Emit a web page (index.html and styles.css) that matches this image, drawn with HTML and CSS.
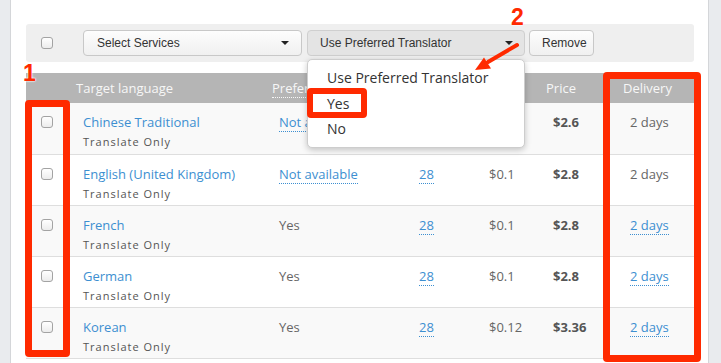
FILE: index.html
```html
<!DOCTYPE html>
<html lang="en">

<head>
    <meta charset="UTF-8">
    <meta name="viewport" content="width=device-width, initial-scale=1.0">
    <title>Target Languages</title>
    <link rel="stylesheet" href="styles.css">
</head>

<body>

    <div class="page">
        <div class="toolbar">
            <span class="check"></span>
            <button class="btn btn-services">Select Services <span class="caret"></span></button>
            <div class="menu-wrap">
                <button class="btn btn-pref">Use Preferred Translator <span class="caret"></span></button>
                <ul class="menu">
                    <li>Use Preferred Translator</li>
                    <li>Yes</li>
                    <li>No</li>
                </ul>
            </div>
            <button class="btn btn-remove">Remove</button>
        </div>

        <table class="langs">
            <colgroup>
                <col class="c-check">
                <col class="c-lang">
                <col class="c-pref">
                <col class="c-count">
                <col class="c-unit">
                <col class="c-price">
                <col class="c-delivery">
            </colgroup>
            <tr>
                <th></th>
                <th>Target language</th>
                <th><span class="dotted">Preferred</span></th>
                <th></th>
                <th></th>
                <th>Price</th>
                <th>Delivery</th>
            </tr>
            <tr>
                <td><span class="check"></span></td>
                <td><a class="lang">Chinese Traditional</a><div class="service">Translate Only</div></td>
                <td><a class="link">Not available</a></td>
                <td><a class="link">26</a></td>
                <td>$0.1</td>
                <td class="price">$2.6</td>
                <td>2 days</td>
            </tr>
            <tr>
                <td><span class="check"></span></td>
                <td><a class="lang">English (United Kingdom)</a><div class="service">Translate Only</div></td>
                <td><a class="link">Not available</a></td>
                <td><a class="link">28</a></td>
                <td>$0.1</td>
                <td class="price">$2.8</td>
                <td>2 days</td>
            </tr>
            <tr>
                <td><span class="check"></span></td>
                <td><a class="lang">French</a><div class="service">Translate Only</div></td>
                <td>Yes</td>
                <td><a class="link">28</a></td>
                <td>$0.1</td>
                <td class="price">$2.8</td>
                <td><a class="link">2 days</a></td>
            </tr>
            <tr>
                <td><span class="check"></span></td>
                <td><a class="lang">German</a><div class="service">Translate Only</div></td>
                <td>Yes</td>
                <td><a class="link">28</a></td>
                <td>$0.1</td>
                <td class="price">$2.8</td>
                <td><a class="link">2 days</a></td>
            </tr>
            <tr>
                <td><span class="check"></span></td>
                <td><a class="lang">Korean</a><div class="service">Translate Only</div></td>
                <td>Yes</td>
                <td><a class="link">28</a></td>
                <td>$0.12</td>
                <td class="price">$3.36</td>
                <td><a class="link">2 days</a></td>
            </tr>
        </table>
    </div>

    <!-- screenshot annotations -->
    <div class="mark box-check"></div>
    <div class="mark box-delivery"></div>
    <div class="mark box-yes"></div>
    <span class="num num-1">1</span>
    <span class="num num-2">2</span>
    <svg class="arrow" width="721" height="363" viewBox="0 0 721 363">
        <line x1="517" y1="45" x2="488" y2="62" stroke="#ff2a00" stroke-width="4" stroke-linecap="round" />
        <polygon points="475,70 484,57.5 491,68.5" fill="#ff2a00" />
    </svg>

</body>

</html>
```

FILE: styles.css
```css
body {
    margin: 0;
    background: #e9ebee;
    font-family: "Open Sans", sans-serif;
    position: relative;
    height: 363px;
    overflow: hidden;
}

.page {
    margin-left: 10px;
    width: 668px;
    height: 339px;
    padding: 24px 14px 0 15px;
    background: white;
    border-left: 1px solid #d4d6d9;
    border-right: 1px solid #d4d6d9;
    overflow: hidden;
}

.toolbar {
    display: flex;
    align-items: center;
    height: 38px;
    padding-left: 15px;
    background: #efefef;
    border-radius: 3px;
}

.check {
    display: block;
    width: 10px;
    height: 10px;
    border: 1px solid #a3a3a3;
    border-radius: 3px;
    background: linear-gradient(#ffffff, #ececec);
}

.toolbar .check {
    margin-right: 30px;
}

.btn {
    display: flex;
    align-items: center;
    justify-content: space-between;
    height: 26px;
    padding: 0 11px 0 12px;
    font-family: "Liberation Sans", Arial, sans-serif;
    font-size: 12px;
    color: #333;
    border: 1px solid #c8c8c8;
    border-radius: 4px;
    background: linear-gradient(#fdfdfd, #f0f0f0);
}

.btn-services {
    width: 219px;
    padding-left: 13px;
    padding-right: 12px;
}

.menu-wrap {
    position: relative;
    margin-left: 5px;
}

.btn-pref {
    width: 218px;
    background: #e4e4e4;
    border-color: #cfcfcf;
}

.btn-remove {
    width: 65px;
    margin-left: 4px;
}

.caret {
    width: 0;
    height: 0;
    border-left: 4px solid transparent;
    border-right: 4px solid transparent;
    border-top: 4px solid #222;
}

.menu {
    position: absolute;
    left: 0;
    top: 29px;
    width: 216px;
    margin: 0;
    padding: 5px 0;
    list-style: none;
    background: white;
    border: 1px solid #cdcdcd;
    border-radius: 5px;
    box-shadow: 0 2px 6px rgba(0, 0, 0, 0.22);
    z-index: 2;
}

.menu li {
    padding-left: 19px;
    line-height: 25.5px;
    font-size: 14px;
    color: #333;
}

.langs {
    width: 668px;
    margin-top: 11px;
    border-collapse: collapse;
    table-layout: fixed;
    font-size: 13px;
    color: #666;
}

.c-check { width: 44px; }
.c-lang { width: 196px; }
.c-pref { width: 140px; }
.c-count { width: 70px; }
.c-unit { width: 64px; }
.c-price { width: 77px; }
.c-delivery { width: 77px; }

th {
    height: 30px;
    padding: 0 0 0 6px;
    background: #b5b5b5;
    color: #f7f7f7;
    font-weight: normal;
    text-align: left;
    white-space: nowrap;
    overflow: hidden;
}

td {
    height: 51px;
    padding: 10px 0 0 13px;
    vertical-align: top;
    line-height: 19px;
    border-bottom: 1px solid #dedede;
    white-space: nowrap;
    box-sizing: border-box;
}

tr:nth-child(even) td {
    background: #f9f9f9;
}

td .check {
    margin: 3px 0 0 2px;
}

.lang {
    color: #3d8fd1;
}

.link {
    color: #3d8fd1;
    border-bottom: 1px dotted #3d8fd1;
}

.dotted {
    border-bottom: 1px dotted #f7f7f7;
}

.service {
    font-size: 11px;
    letter-spacing: 1px;
    color: #555;
}

.price {
    font-weight: bold;
    color: #555;
}

.mark {
    position: absolute;
    box-sizing: border-box;
    border: 7px solid #ff2a00;
    border-radius: 4px;
}

.box-check {
    left: 25px;
    top: 100px;
    width: 45px;
    height: 257px;
}

.box-delivery {
    left: 603px;
    top: 72px;
    width: 98px;
    height: 290px;
}

.box-yes {
    left: 307px;
    top: 88px;
    width: 60px;
    height: 30px;
    border-width: 6px;
    z-index: 3;
}

.num {
    position: absolute;
    font-family: "Liberation Sans", Arial, sans-serif;
    font-weight: bold;
    font-size: 23px;
    line-height: 23px;
    color: #ff2a00;
    text-shadow: 0 0 2px white, 0 0 2px white;
}

.num-1 {
    left: 23px;
    top: 62px;
}

.num-2 {
    left: 511px;
    top: 6px;
}

.arrow {
    position: absolute;
    left: 0;
    top: 0;
    z-index: 4;
}
```
